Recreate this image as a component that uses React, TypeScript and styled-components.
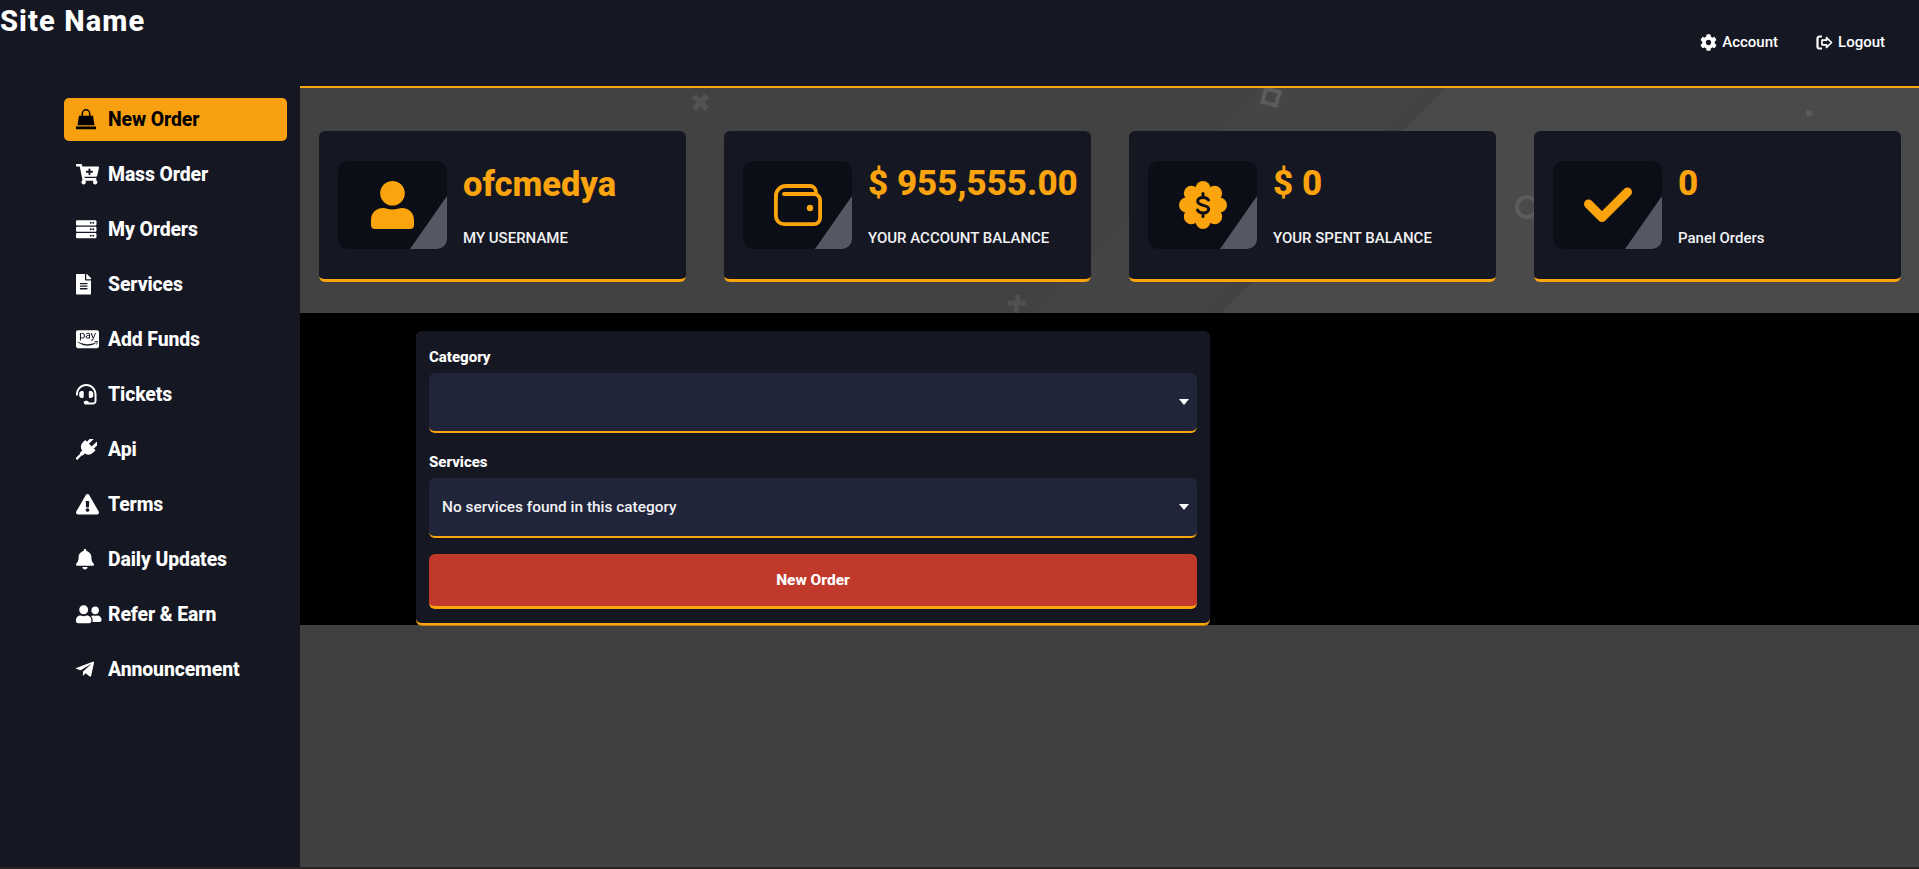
import React from 'react'
import styled, { createGlobalStyle } from 'styled-components'
import {
  FaCartPlus,
  FaServer,
  FaFileAlt,
  FaCcAmazonPay,
  FaHeadset,
  FaExclamationTriangle,
  FaBell,
  FaUserFriends,
  FaTelegramPlane,
  FaCog,
} from 'react-icons/fa'

const orange = '#fca40d'

const GlobalStyle = createGlobalStyle`
  html, body {
    margin: 0;
    padding: 0;
    height: 100%;
    background: #404040;
    overflow: hidden;
  }
  * { box-sizing: border-box; }
  body {
    font-family: Roboto, 'Noto Sans', sans-serif;
    color: #fff;
  }
`

const Page = styled.div`
  width: 1919px;
  height: 869px;
  display: grid;
  grid-template-columns: 300px 1fr;
  grid-template-rows: 88px 779px 2px;
`

const Header = styled.header`
  grid-column: 1 / 3;
  background: #151823;
  border-bottom: 2px solid ${orange};
  display: flex;
  justify-content: space-between;
  position: relative;
`

const HeaderCover = styled.div`
  position: absolute;
  left: 0;
  bottom: -2px;
  width: 300px;
  height: 2px;
  background: #151823;
`

const Brand = styled.div`
  font-size: 29px;
  font-weight: 800;
  line-height: 42px;
  letter-spacing: 1.1px;
`

const TopNav = styled.nav`
  display: flex;
  gap: 38px;
  padding: 31px 34px 0 0;
`

const TopLink = styled.a`
  display: flex;
  align-items: center;
  gap: 5px;
  height: 22px;
  font-size: 15px;
  font-weight: 500;
  svg { font-size: 17px; }
`

const Sidebar = styled.aside`
  background: #151823;
  padding: 10px 13px 0 64px;
  display: flex;
  flex-direction: column;
  gap: 12px;
`

const NavItem = styled.a<{ $active?: boolean }>`
  height: 43px;
  border-radius: 5px;
  display: flex;
  align-items: center;
  padding-left: 12px;
  font-size: 19.4px;
  font-weight: 800;
  letter-spacing: -0.1px;
  background: ${p => (p.$active ? '#f8a010' : 'transparent')};
  color: ${p => (p.$active ? '#000' : '#fff')};
`

const NavIcon = styled.span<{ $width: number }>`
  width: 32px;
  flex: none;
  display: flex;
  align-items: center;
  svg {
    height: 20.5px;
    width: ${p => p.$width}px;
  }
`

const Main = styled.main`
  display: flex;
  flex-direction: column;
  align-items: stretch;
`

const Hero = styled.section`
  height: 225px;
  background: #424242;
  padding: 43px 0 0 19px;
  display: flex;
  gap: 38px;
  position: relative;
  overflow: hidden;
`

const HeroDecor = styled.svg`
  position: absolute;
  left: 0;
  top: 0;
  width: 1619px;
  height: 225px;
`

const StatCard = styled.div`
  width: 367px;
  height: 151px;
  background: #151823;
  border-radius: 6px;
  border-bottom: 3px solid ${orange};
  padding: 30px 19px 0;
  display: flex;
  gap: 16px;
  position: relative;
`

const IconTile = styled.div`
  width: 109px;
  height: 88px;
  flex: none;
  border-radius: 10px;
  background: #0b0e17;
  display: flex;
  align-items: center;
  justify-content: center;
  position: relative;
  overflow: hidden;
  &::after {
    content: '';
    position: absolute;
    inset: 0;
    background: #555862;
    clip-path: polygon(72px 88px, 109px 35px, 109px 88px);
  }
`

const StatBody = styled.div`
  display: flex;
  flex-direction: column;
  min-width: 0;
  padding-top: 1px;
`

const StatValue = styled.div<{ $numeric?: boolean }>`
  font-size: ${p => (p.$numeric ? '35px' : '34.5px')};
  font-weight: 800;
  line-height: 44px;
  color: ${orange};
  white-space: nowrap;
`

const StatLabel = styled.div`
  margin-top: 21px;
  font-size: 15px;
  font-weight: 500;
  line-height: 22px;
  color: #f2f2f5;
  white-space: nowrap;
`

const Content = styled.section`
  height: 312px;
  background: #000;
  padding: 18px 0 0 116px;
`

const OrderCard = styled.form`
  width: 794px;
  height: 294px;
  background: #151823;
  border-radius: 6px;
  border-bottom: 2px solid ${orange};
  padding: 15px 13px 0;
  display: flex;
  flex-direction: column;
  box-shadow: 0 1px 0 #b97a10;
`

const Field = styled.div`
  margin-bottom: 18px;
  &:nth-of-type(2) { margin-bottom: 16px; }
`

const FieldLabel = styled.label`
  display: block;
  font-size: 15px;
  font-weight: 800;
  line-height: 22px;
  margin-bottom: 5px;
`

const SelectBox = styled.div`
  height: 60px;
  background: #20253a;
  border-radius: 6px;
  border-bottom: 2px solid ${orange};
  display: flex;
  align-items: center;
  justify-content: space-between;
  padding: 0 8px 0 13px;
  font-size: 15.4px;
  font-weight: 500;
  color: #f2f2f5;
`

const Caret = styled.span`
  width: 0;
  height: 0;
  border-left: 5px solid transparent;
  border-right: 5px solid transparent;
  border-top: 6px solid #fff;
`

const SubmitButton = styled.button`
  height: 55px;
  width: 100%;
  border: 0;
  border-bottom: 3px solid ${orange};
  border-radius: 6px;
  background: #c0392b;
  color: #fff;
  font-family: inherit;
  font-size: 15.5px;
  font-weight: 800;
`

const BottomEdge = styled.div`
  grid-column: 1 / 3;
  background: #2c2320;
`

const BagIcon = () => (
  <svg viewBox="0 0 20 20" fill="currentColor">
    <path d="M1.500 16 3 6.500H17L18.500 16Z" />
    <path d="M0 17.200h20V20H0Z" />
    <path d="M6.300 7V4.300a3.700 3.700 0 0 1 7.400 0V7" fill="none" stroke="currentColor" strokeWidth="1.500" />
  </svg>
)

const PlugIcon = () => (
  <svg viewBox="0 0 21 21" fill="currentColor">
    <g transform="rotate(45 10.500 10.500)">
      <path d="M5.500-2.500h3V5h-3ZM12.500-2.500h3V5h-3Z" />
      <path d="M3 4.500h15v3a7 7 0 0 1-5.500 7V18h-4v-3.500A7 7 0 0 1 3 7.500Z" />
      <path d="M9.300 16h2.400v9H9.300Z" />
    </g>
  </svg>
)

const LogoutIcon = () => (
  <svg width="17" height="15" viewBox="0 0 17 15" fill="none" stroke="currentColor">
    <path d="M6 1.500H3.500a2 2 0 0 0-2 2v8a2 2 0 0 0 2 2H6" strokeWidth="2.200" />
    <path d="M10.500 2.500 15.500 7.500 10.500 12.500V9.800H6V5.200H10.500Z" strokeWidth="1.700" strokeLinejoin="round" />
  </svg>
)

const UserIcon = () => (
  <svg width="43" height="48" viewBox="0 0 43 48" fill={orange}>
    <circle cx="21.500" cy="12.300" r="12.300" />
    <path d="M0 44V39C0 31 6 27 12 27c3 0 5 1.500 9.500 1.500S28 27 31 27c6 0 12 4 12 12v5a4 4 0 0 1-4 4H4a4 4 0 0 1-4-4Z" />
  </svg>
)

const WalletIcon = () => (
  <svg width="48" height="42" viewBox="0 0 48 42" fill="none" stroke={orange} strokeWidth="3.800" strokeLinecap="round">
    <path d="M1.900 12a10 10 0 0 1 10-10h24a6 6 0 0 1 6 6v2" />
    <path d="M10 10h30a6.100 6.100 0 0 1 6.100 6.100V34a6.100 6.100 0 0 1-6.100 6.100H10A8.100 8.100 0 0 1 1.900 32V12" />
    <circle cx="36" cy="24" r="3.200" fill={orange} stroke="none" />
  </svg>
)

const BadgeDollarIcon = () => (
  <svg width="48" height="48" viewBox="0 0 48 48">
    <g fill={orange}>
      <circle cx="24" cy="24" r="18" />
      {[0, 45, 90, 135, 180, 225, 270, 315].map(a => (
        <circle
          key={a}
          cx={24 + 16.5 * Math.cos((a * Math.PI) / 180)}
          cy={24 + 16.5 * Math.sin((a * Math.PI) / 180)}
          r="7.500"
        />
      ))}
    </g>
    <path
      d="M29.500 19c-1-1.800-3-2.600-5.500-2.600-3 0-5.300 1.500-5.300 3.900 0 5.300 11 2.800 11 7.800 0 2.400-2.300 3.900-5.500 3.900-2.700 0-4.700-1-5.700-2.900M24 12.500V16M24 32v3.500"
      fill="none"
      stroke="#0b0e17"
      strokeWidth="3"
      strokeLinecap="round"
    />
  </svg>
)

const CheckIcon = () => (
  <svg width="48" height="36" viewBox="0 0 48 36" fill="none" stroke={orange} strokeWidth="9" strokeLinecap="round" strokeLinejoin="round">
    <path d="M4.500 17 18 30.500 43.500 5" />
  </svg>
)

const navItems = [
  { label: 'New Order', icon: <BagIcon />, width: 20, active: true },
  { label: 'Mass Order', icon: <FaCartPlus />, width: 23 },
  { label: 'My Orders', icon: <FaServer />, width: 20.5 },
  { label: 'Services', icon: <FaFileAlt />, width: 15.4 },
  { label: 'Add Funds', icon: <FaCcAmazonPay />, width: 23 },
  { label: 'Tickets', icon: <FaHeadset />, width: 20.5 },
  { label: 'Api', icon: <PlugIcon />, width: 20.5 },
  { label: 'Terms', icon: <FaExclamationTriangle />, width: 23 },
  { label: 'Daily Updates', icon: <FaBell />, width: 18 },
  { label: 'Refer & Earn', icon: <FaUserFriends />, width: 25.6 },
  { label: 'Announcement', icon: <FaTelegramPlane />, width: 18 },
]

const stats = [
  { value: 'ofcmedya', label: 'MY USERNAME', icon: <UserIcon /> },
  { value: '$ 955,555.00', label: 'YOUR ACCOUNT BALANCE', icon: <WalletIcon />, numeric: true },
  { value: '$ 0', label: 'YOUR SPENT BALANCE', icon: <BadgeDollarIcon />, numeric: true },
  { value: '0', label: 'Panel Orders', icon: <CheckIcon />, numeric: true },
]

export default function App() {
  return (
    <Page>
      <GlobalStyle />
      <Header>
        <Brand>Site Name</Brand>
        <TopNav>
          <TopLink><FaCog /> Account</TopLink>
          <TopLink><LogoutIcon /> Logout</TopLink>
        </TopNav>
        <HeaderCover />
      </Header>
      <Sidebar>
        {navItems.map(item => (
          <NavItem key={item.label} $active={item.active}>
            <NavIcon $width={item.width}>{item.icon}</NavIcon>
            {item.label}
          </NavItem>
        ))}
      </Sidebar>
      <Main>
        <Hero>
          <HeroDecor viewBox="0 0 1619 225">
            <path d="M960 0H1127L902 225H735Z" fill="#454545" />
            <path d="M1146 0H1619V225H921Z" fill="#4a4a4a" />
            <path d="M394 8l13 13M407 8l-13 13" stroke="#525252" strokeWidth="6" />
            <rect x="964" y="2" width="14" height="14" transform="rotate(15 971 9)" fill="none" stroke="#5c5c5c" strokeWidth="4" />
            <path d="M718 207l-2 18M708 215h18" stroke="#505050" strokeWidth="5" />
            <circle cx="1227" cy="119" r="10" fill="none" stroke="#5c5c5c" strokeWidth="4" />
            <circle cx="1509" cy="25" r="3" fill="#5c5c5c" />
          </HeroDecor>
          {stats.map(s => (
            <StatCard key={s.label}>
              <IconTile>{s.icon}</IconTile>
              <StatBody>
                <StatValue $numeric={s.numeric}>{s.value}</StatValue>
                <StatLabel>{s.label}</StatLabel>
              </StatBody>
            </StatCard>
          ))}
        </Hero>
        <Content>
          <OrderCard>
            <Field>
              <FieldLabel>Category</FieldLabel>
              <SelectBox><span /><Caret /></SelectBox>
            </Field>
            <Field>
              <FieldLabel>Services</FieldLabel>
              <SelectBox>No services found in this category<Caret /></SelectBox>
            </Field>
            <SubmitButton type="button">New Order</SubmitButton>
          </OrderCard>
        </Content>
      </Main>
      <BottomEdge />
    </Page>
  )
}
